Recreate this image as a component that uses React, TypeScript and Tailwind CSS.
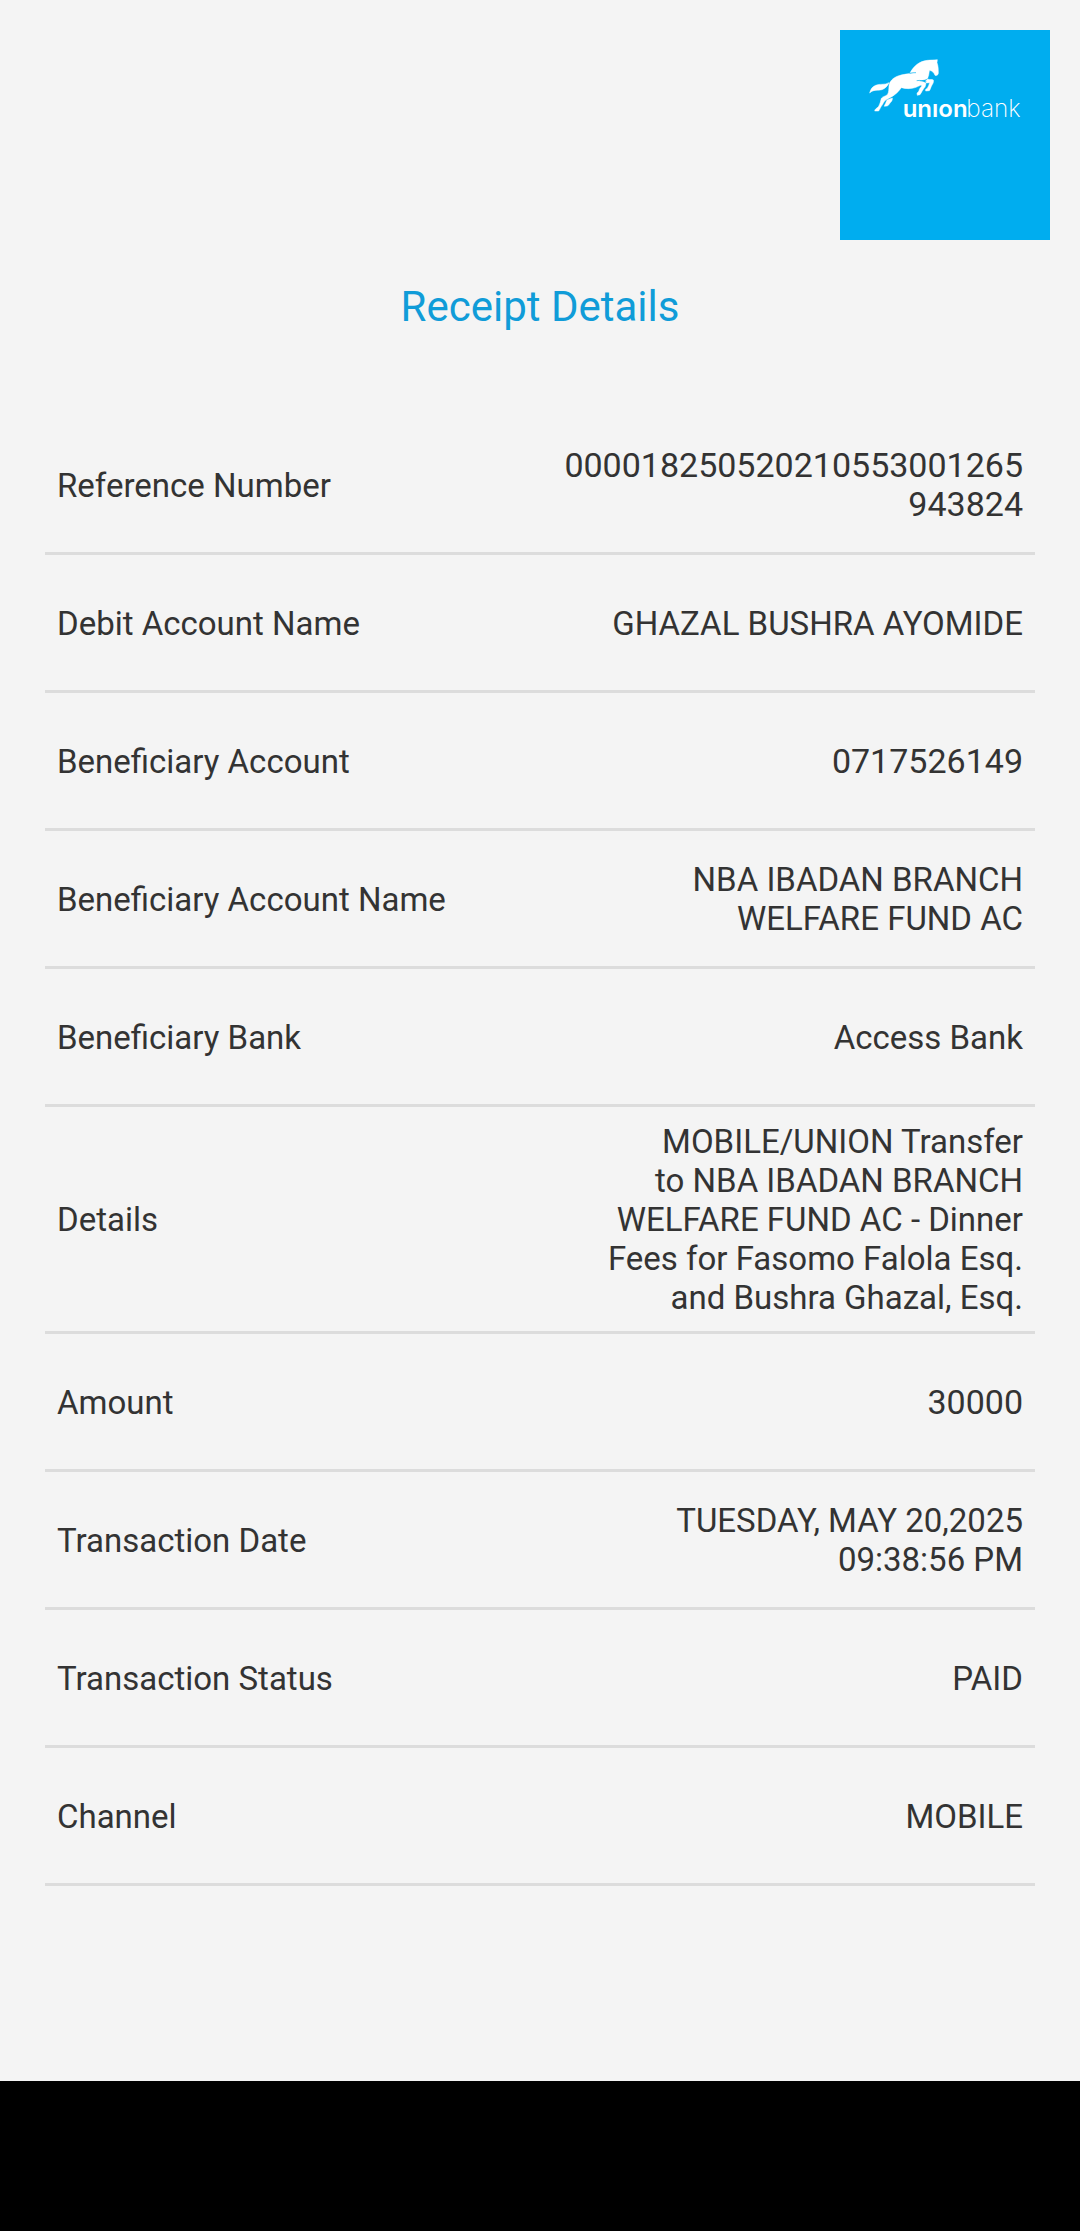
const rows: { label: string; value: string; numeric?: boolean }[] = [
  { label: "Reference Number", value: "000018250520210553001265943824", numeric: true },
  { label: "Debit Account Name", value: "GHAZAL BUSHRA AYOMIDE" },
  { label: "Beneficiary Account", value: "0717526149", numeric: true },
  { label: "Beneficiary Account Name", value: "NBA IBADAN BRANCH\nWELFARE FUND AC" },
  { label: "Beneficiary Bank", value: "Access Bank" },
  {
    label: "Details",
    value:
      "MOBILE/UNION Transfer\nto NBA IBADAN BRANCH\nWELFARE FUND AC - Dinner\nFees for Fasomo Falola Esq.\nand Bushra Ghazal, Esq.",
  },
  { label: "Amount", value: "30000", numeric: true },
  { label: "Transaction Date", value: "TUESDAY, MAY 20,2025\n09:38:56 PM" },
  { label: "Transaction Status", value: "PAID" },
  { label: "Channel", value: "MOBILE" },
];

function UnionBankLogo() {
  return (
    <svg viewBox="30 30 630 630" className="size-[210px] bg-[#00adef]" role="img" aria-label="Union Bank">
      <g fill="#fff" stroke="#fff" strokeWidth="1.5" strokeLinejoin="round">
        {/* head and mane */}
        <path d="M240 159C252 137 268 124 292 121C302 119 312 121 322 119L321 128C325 138 325 150 325 160C324 166 319 168 315 166C312 158 307 153 299 151C296 156 298 166 293 173C288 179 279 181 262 181L250 161Z" />
        {/* body, front leg and hind leg */}
        <path d="M251 160C236 161 218 163 204 168C188 174 179 184 177 197C176 208 177 217 172 224C166 229 157 230 154 235C152 243 150 252 146 259C141 265 135 266 134 273L146 273C150 268 151 262 156 256C160 250 162 244 167 240C176 234 187 230 194 224C202 218 209 210 214 203C228 207 245 207 258 202C265 199 269 196 275 195L274 200C268 205 268 210 265 216L261 219L262 226L270 224C275 219 276 211 281 206C286 202 287 196 288 190C285 186 276 184 262 182L294 174L282 158Z" />
        {/* far front leg */}
        <path d="M286 183L293 177C299 180 306 177 310 180C312 186 308 192 305 197C302 201 302 208 298 212L287 213L287 208L292 205C295 200 297 194 299 188L289 189Z" />
        {/* far hind leg */}
        <path d="M187 234C188 240 184 246 180 249C177 253 176 257 171 258L163 259C164 253 167 252 168 247L171 240Z" />
        {/* tail */}
        <path d="M119 219C122 207 127 200 137 196C151 190 164 196 177 188C173 197 167 205 156 209C143 212 129 208 119 219Z" />
      </g>
      <path d="M239 160C246 158 252 158 258 158M260 182C272 180 280 183 289 184" fill="none" stroke="#00adef" strokeWidth="2" />
      <text x="218" y="292" fill="#fff" fontFamily="Inter, sans-serif" fontWeight="600" fontSize="72">
        unıon
      </text>
      <text x="409" y="292" fill="#fff" fontFamily="Inter, sans-serif" fontWeight="200" fontSize="73">
        bank
      </text>
    </svg>
  );
}

export default function App() {
  return (
    <div className="flex min-h-screen flex-col bg-black font-[Roboto,sans-serif] text-[#333333]">
      <main className="bg-[#f4f4f4] px-[45px] pb-[195px]">
        <header className="-mx-[15px] flex justify-end pt-[30px]">
          <UnionBankLogo />
        </header>
        <h1 className="mt-[42px] text-center text-[42px] leading-[50px] text-[#109cd8]">Receipt Details</h1>
        <dl className="mt-[85px]">
          {rows.map((row) => (
            <div
              key={row.label}
              className="flex min-h-[138px] items-center justify-between border-b-[3px] border-[#dcdcdc] px-3 pt-[15px] pb-[14px] text-[33px] leading-[39px]"
            >
              <dt>{row.label}</dt>
              <dd
                className={
                  row.numeric
                    ? "w-[48%] text-right text-[34px] break-all"
                    : "text-right whitespace-pre-line"
                }
              >
                {row.value}
              </dd>
            </div>
          ))}
        </dl>
      </main>
    </div>
  );
}
